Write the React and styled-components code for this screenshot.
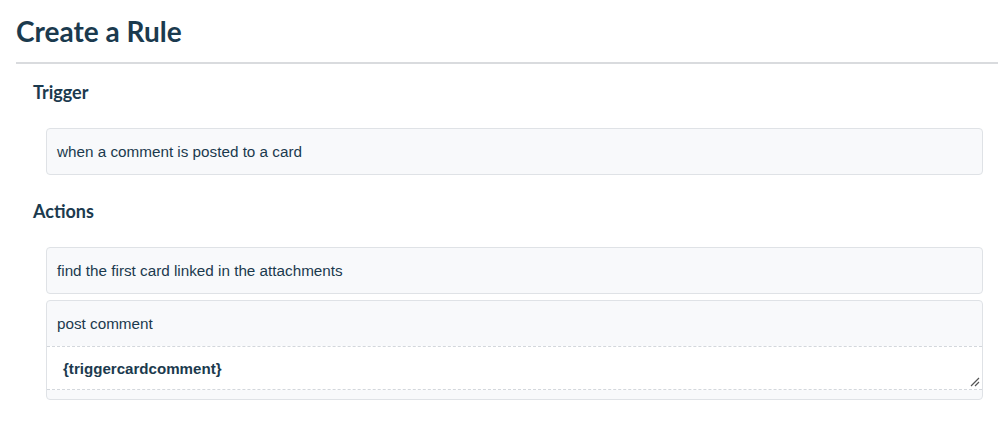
import React from "react";
import styled, { createGlobalStyle } from "styled-components";

const ink = "#1b3a4e";

const GlobalStyle = createGlobalStyle`
    body {
        margin: 0;
        background: #ffffff;
        font-family: "Liberation Sans", Arial, sans-serif;
        color: ${ink};
    }
`

const Page = styled.div`
    padding: 14px 0 0 16px;
`

const Titulo = styled.h1`
    margin: 0;
    padding-bottom: 14px;
    font-family: Lato, "Open Sans", sans-serif;
    font-weight: 700;
    font-size: 28px;
    line-height: 34px;
    color: ${ink};
    border-bottom: 2px solid #d9dbde;
`

const Seccion = styled.section`
    padding: 0 15px 0 17px;
`

const Subtitulo = styled.h2`
    margin: 0;
    padding: ${(p) => p.$top}px 0 0;
    font-family: Lato, "Open Sans", sans-serif;
    font-weight: 700;
    font-size: 18px;
    line-height: 22px;
    color: ${ink};
`

const Lista = styled.div`
    display: flex;
    flex-direction: column;
    gap: 6px;
    margin: 25px 0 0 13px;
`

const Caja = styled.div`
    border: 1px solid #dfe2e6;
    border-radius: 4px;
    background: #f8f9fb;
    overflow: hidden;
`

const Campo = styled.div`
    height: 45px;
    padding: 0 10px;
    display: flex;
    align-items: center;
    font-size: 15.25px;
    color: ${ink};
`

const AreaTexto = styled.div`
    position: relative;
    height: 42px;
    margin-bottom: 9px;
    padding: 0 16px;
    display: flex;
    align-items: center;
    background: #ffffff;
    border-top: 1px dashed #d3d7dc;
    border-bottom: 1px dashed #d3d7dc;
    font-size: 15.1px;
    font-weight: 700;
    color: ${ink};
`

const Agarre = styled.svg`
    position: absolute;
    right: 2px;
    bottom: 2px;
`

const App = () =>
{
    return(
        <Page>
            <GlobalStyle />
            <Titulo>Create a Rule</Titulo>
            <Seccion>
                <Subtitulo $top={17}>Trigger</Subtitulo>
                <Lista>
                    <Caja>
                        <Campo>when a comment is posted to a card</Campo>
                    </Caja>
                </Lista>
                <Subtitulo $top={25}>Actions</Subtitulo>
                <Lista>
                    <Caja>
                        <Campo>find the first card linked in the attachments</Campo>
                    </Caja>
                    <Caja>
                        <Campo>post comment</Campo>
                        <AreaTexto>
                            {"{triggercardcomment}"}
                            <Agarre width="11" height="11" viewBox="0 0 11 11">
                                <path d="M10 2 L2 10 M10 6 L6 10" stroke="#555" strokeWidth="1.2" fill="none" />
                            </Agarre>
                        </AreaTexto>
                    </Caja>
                </Lista>
            </Seccion>
        </Page>
    )
}

export default App;
